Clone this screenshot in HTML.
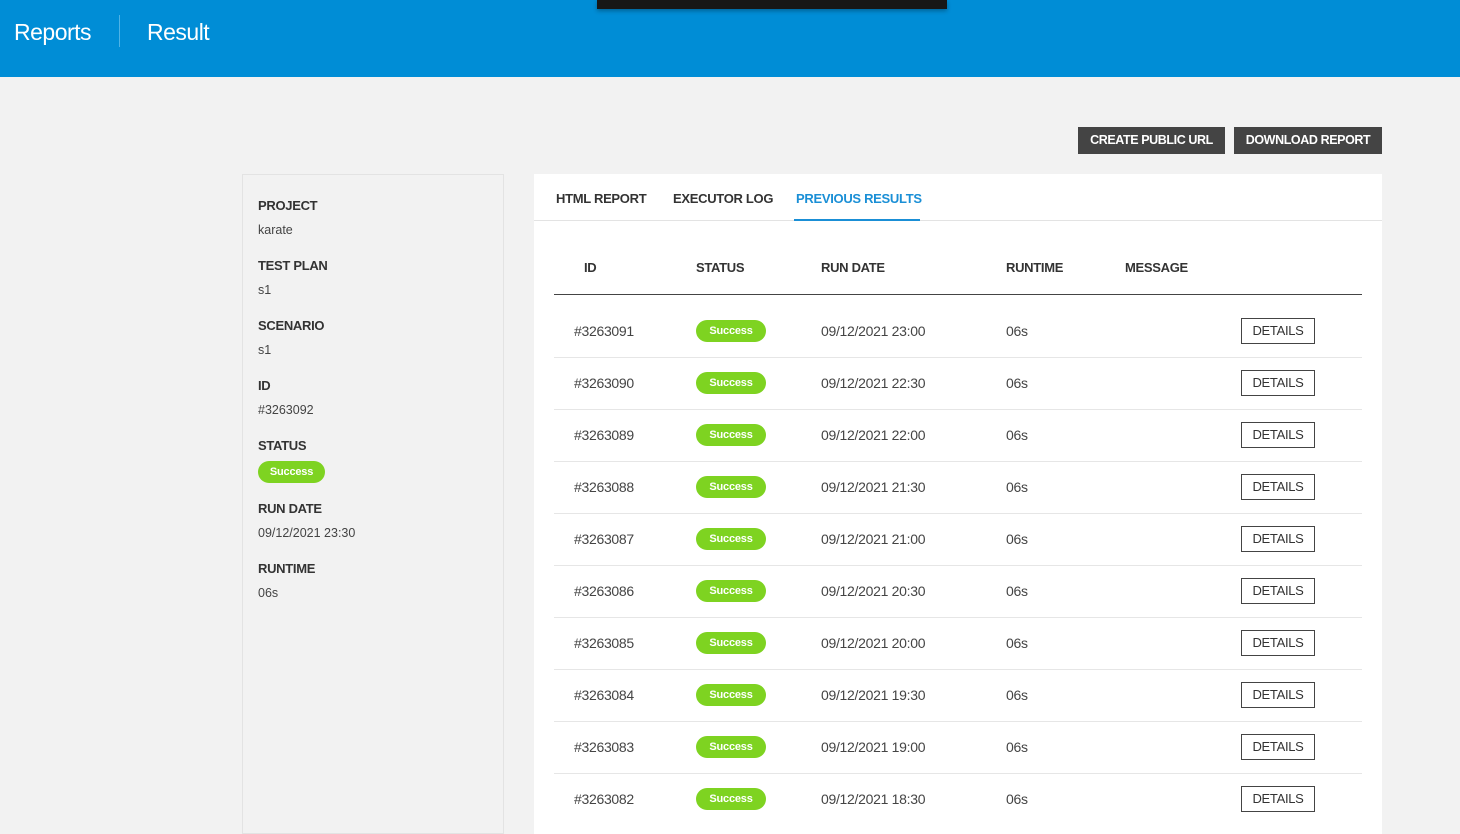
<!DOCTYPE html>
<html><head><meta charset="utf-8"><style>
*{margin:0;padding:0;box-sizing:border-box}
body{width:1460px;height:824px;overflow:hidden;background:#f2f2f2;font-family:"Liberation Sans",sans-serif;color:#333;position:relative}
.a{position:absolute;white-space:nowrap}
.hdr{position:absolute;left:0;top:0;width:1460px;height:77px;background:#008dd6}
.pill{position:absolute;width:70px;height:22px;border-radius:11px;background:#7ed321;color:#fff;font-weight:bold;font-size:11px;line-height:22px;text-align:center;letter-spacing:-0.2px}
.det{position:absolute;width:74px;height:26px;border:1px solid #444;font-size:13px;line-height:24px;text-align:center;color:#333;letter-spacing:-0.3px}
.btn{position:absolute;top:127px;height:27px;background:#444;color:#fff;font-weight:bold;font-size:12.5px;line-height:27px;text-align:center;letter-spacing:-0.4px}
.lab{font-size:13px;font-weight:bold;color:#333;letter-spacing:-0.3px}
.val{font-size:12.5px;color:#444}
.cell{font-size:14px;color:#444;letter-spacing:-0.3px}
</style></head><body>
<div class="hdr"></div>
<div class="a" style="left:597px;top:0;width:350px;height:9px;background:#171717;box-shadow:0 2px 4px rgba(0,0,0,.3)"></div>
<div class="a" style="left:14px;top:19px;font-size:23px;color:#fff;letter-spacing:-0.5px">Reports</div>
<div class="a" style="left:119px;top:15px;width:1px;height:32px;background:#4fb3e6"></div>
<div class="a" style="left:147px;top:19px;font-size:23px;color:#fff;letter-spacing:-0.5px">Result</div>

<div class="btn" style="left:1078px;width:147px">CREATE PUBLIC URL</div>
<div class="btn" style="left:1234px;width:148px">DOWNLOAD REPORT</div>

<div class="a" style="left:242px;top:174px;width:262px;height:660px;border:1px solid #e3e3e3;background:#f2f2f2"></div>
<div class="a lab" style="left:258px;top:198px">PROJECT</div><div class="a val" style="left:258px;top:223px">karate</div>
<div class="a lab" style="left:258px;top:258px">TEST PLAN</div><div class="a val" style="left:258px;top:283px">s1</div>
<div class="a lab" style="left:258px;top:318px">SCENARIO</div><div class="a val" style="left:258px;top:343px">s1</div>
<div class="a lab" style="left:258px;top:378px">ID</div><div class="a val" style="left:258px;top:403px">#3263092</div>
<div class="a lab" style="left:258px;top:438px">STATUS</div><div class="pill" style="left:258px;top:461px;width:67px">Success</div>
<div class="a lab" style="left:258px;top:501px">RUN DATE</div><div class="a val" style="left:258px;top:526px">09/12/2021 23:30</div>
<div class="a lab" style="left:258px;top:561px">RUNTIME</div><div class="a val" style="left:258px;top:586px">06s</div>

<div class="a" style="left:534px;top:174px;width:848px;height:660px;background:#fff"></div>
<div class="a" style="left:534px;top:220px;width:848px;height:1px;background:#e3e3e3"></div>
<div class="a lab" style="left:556px;top:191px;color:#333">HTML REPORT</div>
<div class="a lab" style="left:673px;top:191px">EXECUTOR LOG</div>
<div class="a lab" style="left:796px;top:191px;color:#1a8fd6">PREVIOUS RESULTS</div>
<div class="a" style="left:794px;top:219px;width:126px;height:2px;background:#1a8fd6"></div>

<div class="a lab" style="left:584px;top:260px">ID</div>
<div class="a lab" style="left:696px;top:260px">STATUS</div>
<div class="a lab" style="left:821px;top:260px">RUN DATE</div>
<div class="a lab" style="left:1006px;top:260px">RUNTIME</div>
<div class="a lab" style="left:1125px;top:260px">MESSAGE</div>
<div class="a" style="left:554px;top:294px;width:808px;height:1px;background:#444"></div>

<div id="rows"></div>
<script>
var ids=[3263091,3263090,3263089,3263088,3263087,3263086,3263085,3263084,3263083,3263082];
var d=["23:00","22:30","22:00","21:30","21:00","20:30","20:00","19:30","19:00","18:30"];
var h="";
for(var i=0;i<10;i++){var c=331+52*i;
h+='<div class="a cell" style="left:574px;top:'+(c-8)+'px">#'+ids[i]+'</div>';
h+='<div class="pill" style="left:696px;top:'+(c-11)+'px">Success</div>';
h+='<div class="a cell" style="left:821px;top:'+(c-8)+'px">09/12/2021 '+d[i]+'</div>';
h+='<div class="a cell" style="left:1006px;top:'+(c-8)+'px">06s</div>';
h+='<div class="det" style="left:1241px;top:'+(c-13)+'px">DETAILS</div>';
if(i<9)h+='<div class="a" style="left:554px;top:'+(c+26)+'px;width:808px;height:1px;background:#e6e6e6"></div>';}
document.getElementById("rows").innerHTML=h;
</script>
</body></html>
